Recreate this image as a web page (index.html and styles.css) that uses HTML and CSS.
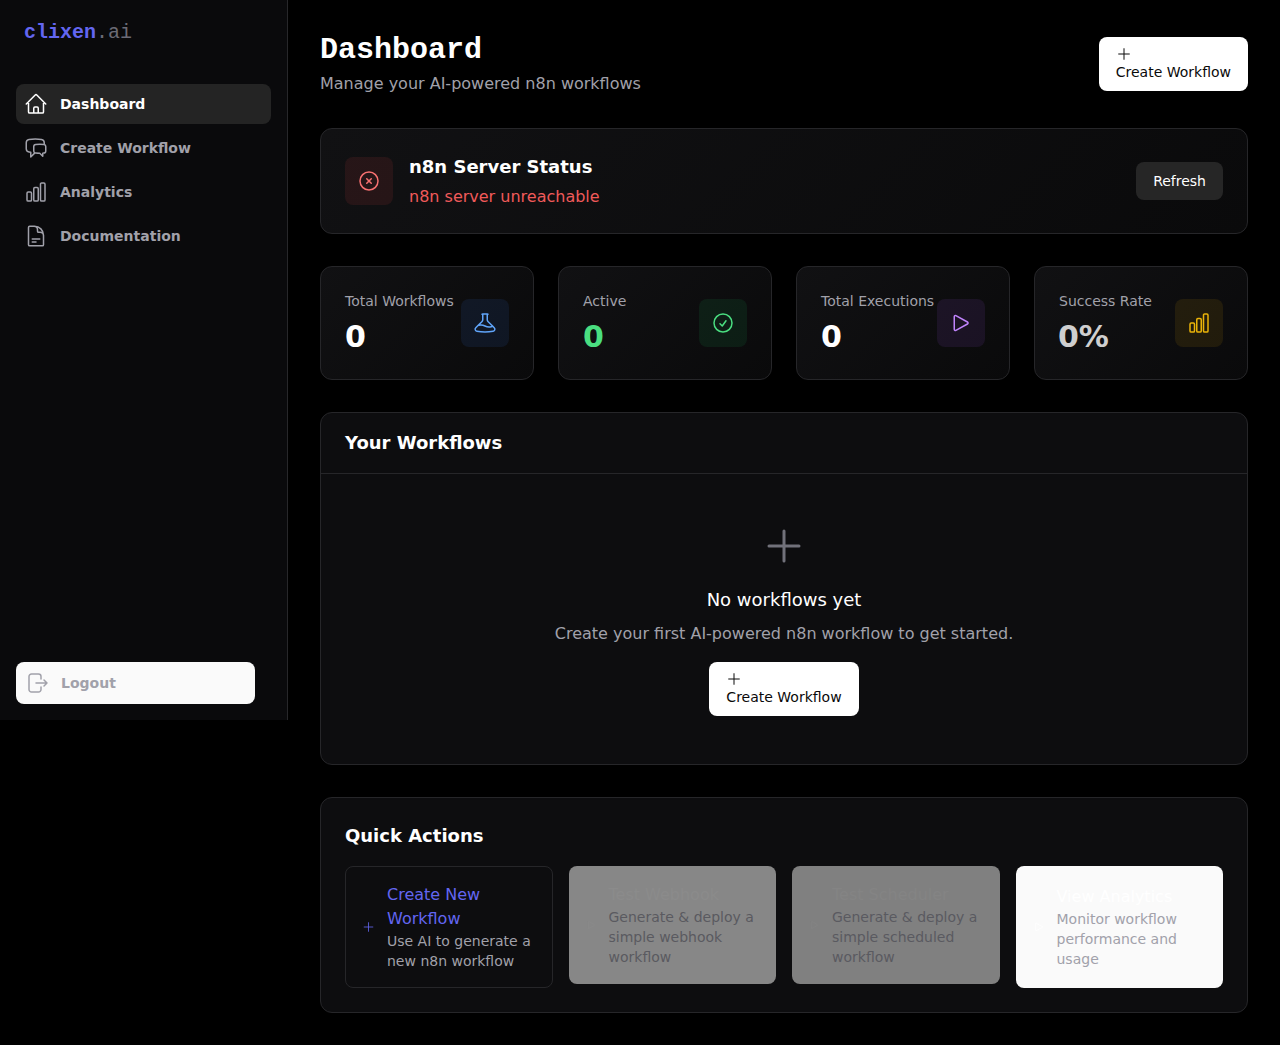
FILE: index.html
```html
<!DOCTYPE html>
<html lang="en">
<head>
    <meta charset="UTF-8">
    <meta name="viewport" content="width=device-width, initial-scale=1.0">
    <title>clixen.ai - Dashboard</title>
    <link rel="stylesheet" href="styles.css">
</head>
<body>
    <svg class="sprite" aria-hidden="true">
        <symbol id="i-home" viewBox="0 0 24 24"><path d="M2.25 12l8.954-8.955c.44-.439 1.152-.439 1.591 0L21.75 12M4.5 9.75v10.125c0 .621.504 1.125 1.125 1.125H9.75v-4.875c0-.621.504-1.125 1.125-1.125h2.25c.621 0 1.125.504 1.125 1.125V21h4.125c.621 0 1.125-.504 1.125-1.125V9.75M8.25 21h8.25"/></symbol>
        <symbol id="i-chat" viewBox="0 0 24 24"><path d="M20.25 8.511c.884.284 1.5 1.128 1.5 2.097v4.286c0 1.136-.847 2.1-1.98 2.193-.34.027-.68.052-1.02.072v3.091l-3-3c-1.354 0-2.694-.055-4.02-.163a2.115 2.115 0 01-.825-.242m9.345-8.334a2.126 2.126 0 00-.476-.095 48.64 48.64 0 00-8.048 0c-1.131.094-1.976 1.057-1.976 2.192v4.286c0 .837.46 1.58 1.155 1.951m9.345-8.334V6.637c0-1.621-1.152-3.026-2.76-3.235A48.455 48.455 0 0011.25 3c-2.115 0-4.198.137-6.24.402-1.608.209-2.76 1.614-2.76 3.235v6.226c0 1.621 1.152 3.026 2.76 3.235.577.075 1.157.14 1.74.194V21l4.155-4.155"/></symbol>
        <symbol id="i-chart" viewBox="0 0 24 24"><path d="M3 13.125C3 12.504 3.504 12 4.125 12h2.25c.621 0 1.125.504 1.125 1.125v6.75C7.5 20.496 6.996 21 6.375 21h-2.25A1.125 1.125 0 013 19.875v-6.75zM9.75 8.625c0-.621.504-1.125 1.125-1.125h2.25c.621 0 1.125.504 1.125 1.125v11.25c0 .621-.504 1.125-1.125 1.125h-2.25a1.125 1.125 0 01-1.125-1.125V8.625zM16.5 4.125c0-.621.504-1.125 1.125-1.125h2.25C20.496 3 21 3.504 21 4.125v15.75c0 .621-.504 1.125-1.125 1.125h-2.25a1.125 1.125 0 01-1.125-1.125V4.125z"/></symbol>
        <symbol id="i-doc" viewBox="0 0 24 24"><path d="M19.5 14.25v-2.625a3.375 3.375 0 00-3.375-3.375h-1.5A1.125 1.125 0 0113.5 7.125v-1.5a3.375 3.375 0 00-3.375-3.375H8.25m0 12.75h7.5m-7.5 3H12M10.5 2.25H5.625c-.621 0-1.125.504-1.125 1.125v17.25c0 .621.504 1.125 1.125 1.125h12.75c.621 0 1.125-.504 1.125-1.125V11.25a9 9 0 00-9-9z"/></symbol>
        <symbol id="i-logout" viewBox="0 0 24 24"><path d="M16 8V5.5A2.5 2.5 0 0013.5 3h-7A2.5 2.5 0 004 5.5v13A2.5 2.5 0 006.5 21h7a2.5 2.5 0 002.5-2.5V16M11 12h11M19 9l3 3-3 3"/></symbol>
        <symbol id="i-plus" viewBox="0 0 24 24"><path d="M12 4v16m8-8H4"/></symbol>
        <symbol id="i-plus-lg" viewBox="0 0 24 24"><path d="M12 4.5v15m7.5-7.5h-15"/></symbol>
        <symbol id="i-x" viewBox="0 0 24 24"><path d="M9.75 9.75l4.5 4.5m0-4.5l-4.5 4.5M21 12a9 9 0 11-18 0 9 9 0 0118 0z"/></symbol>
        <symbol id="i-beaker" viewBox="0 0 24 24"><path d="M9.75 3.104v5.714a2.25 2.25 0 01-.659 1.591L5 14.5M9.75 3.104c-.251.023-.501.05-.75.082m.75-.082a24.301 24.301 0 014.5 0m0 0v5.714c0 .597.237 1.17.659 1.591L19.8 15.3M14.25 3.104c.251.023.501.05.75.082M19.8 15.3l-1.57.393A9.065 9.065 0 0112 15a9.065 9.065 0 00-6.23-.693L5 14.5m14.8.8l1.402 1.402c1.232 1.232.65 3.318-1.067 3.611A48.309 48.309 0 0112 21c-2.773 0-5.491-.235-8.135-.687-1.718-.293-2.3-2.379-1.067-3.61L5 14.5"/></symbol>
        <symbol id="i-check" viewBox="0 0 24 24"><path d="M9 12.75L11.25 15 15 9.75M21 12a9 9 0 11-18 0 9 9 0 0118 0z"/></symbol>
        <symbol id="i-play" viewBox="0 0 24 24"><path d="M5.25 5.653c0-.856.917-1.398 1.667-.986l11.54 6.348a1.125 1.125 0 010 1.971l-11.54 6.347a1.125 1.125 0 01-1.667-.985V5.653z"/></symbol>
    </svg>

    <aside class="sidebar">
        <div class="logo"><span class="logo-name">clixen</span><span class="logo-tld">.ai</span></div>
        <nav class="nav">
            <a class="nav-item active"><svg class="icon"><use href="#i-home"/></svg>Dashboard</a>
            <a class="nav-item"><svg class="icon"><use href="#i-chat"/></svg>Create Workflow</a>
            <a class="nav-item"><svg class="icon"><use href="#i-chart"/></svg>Analytics</a>
            <a class="nav-item"><svg class="icon"><use href="#i-doc"/></svg>Documentation</a>
        </nav>
        <button class="logout"><svg class="icon"><use href="#i-logout"/></svg>Logout</button>
    </aside>

    <main class="main">
        <header class="page-header">
            <div>
                <h1 class="page-title">Dashboard</h1>
                <p class="page-sub">Manage your AI-powered n8n workflows</p>
            </div>
            <button class="btn-create"><svg class="icon-sm"><use href="#i-plus"/></svg><span>Create Workflow</span></button>
        </header>

        <section class="card status">
            <div class="icon-box red"><svg class="icon"><use href="#i-x"/></svg></div>
            <div class="status-text">
                <h3 class="status-title">n8n Server Status</h3>
                <p class="status-msg">n8n server unreachable</p>
            </div>
            <button class="btn-refresh">Refresh</button>
        </section>

        <section class="stats">
            <div class="card stat">
                <div>
                    <p class="stat-label">Total Workflows</p>
                    <p class="stat-value">0</p>
                </div>
                <div class="icon-box blue"><svg class="icon"><use href="#i-beaker"/></svg></div>
            </div>
            <div class="card stat">
                <div>
                    <p class="stat-label">Active</p>
                    <p class="stat-value value-green">0</p>
                </div>
                <div class="icon-box green"><svg class="icon"><use href="#i-check"/></svg></div>
            </div>
            <div class="card stat">
                <div>
                    <p class="stat-label">Total Executions</p>
                    <p class="stat-value">0</p>
                </div>
                <div class="icon-box purple"><svg class="icon"><use href="#i-play"/></svg></div>
            </div>
            <div class="card stat">
                <div>
                    <p class="stat-label">Success Rate</p>
                    <p class="stat-value value-grey">0%</p>
                </div>
                <div class="icon-box yellow"><svg class="icon"><use href="#i-chart"/></svg></div>
            </div>
        </section>

        <section class="panel">
            <h2 class="panel-head">Your Workflows</h2>
            <div class="empty">
                <svg class="empty-icon"><use href="#i-plus-lg"/></svg>
                <h3 class="empty-title">No workflows yet</h3>
                <p class="empty-text">Create your first AI-powered n8n workflow to get started.</p>
                <button class="btn-create"><svg class="icon-sm"><use href="#i-plus"/></svg><span>Create Workflow</span></button>
            </div>
        </section>

        <section class="panel quick">
            <h2 class="quick-title">Quick Actions</h2>
            <div class="quick-grid">
                <button class="action action-primary">
                    <svg class="action-icon"><use href="#i-plus"/></svg>
                    <span><span class="action-name">Create New Workflow</span><span class="action-desc">Use AI to generate a new n8n workflow</span></span>
                </button>
                <button class="action action-webhook">
                    <svg class="action-icon"><use href="#i-play"/></svg>
                    <span><span class="action-name">Test Webhook</span><span class="action-desc">Generate &amp; deploy a simple webhook workflow</span></span>
                </button>
                <button class="action action-schedule">
                    <svg class="action-icon"><use href="#i-play"/></svg>
                    <span><span class="action-name">Test Scheduler</span><span class="action-desc">Generate &amp; deploy a simple scheduled workflow</span></span>
                </button>
                <button class="action action-light">
                    <svg class="action-icon"><use href="#i-play"/></svg>
                    <span><span class="action-name">View Analytics</span><span class="action-desc">Monitor workflow performance and usage</span></span>
                </button>
            </div>
        </section>
    </main>
</body>
</html>
```

FILE: styles.css
```css
* {
    box-sizing: border-box;
}

body {
    margin: 0;
    background-color: #000;
    color: #fff;
    font-family: "DejaVu Sans", sans-serif;
    display: flex;
    align-items: flex-start;
}

h1, h2, h3, p {
    margin: 0;
}

button {
    font-family: inherit;
    cursor: pointer;
}

.sprite {
    display: none;
}

.icon,
.icon-sm,
.empty-icon,
.action-icon {
    fill: none;
    stroke: currentColor;
    stroke-width: 1.5;
    stroke-linecap: round;
    stroke-linejoin: round;
}

.icon {
    width: 24px;
    height: 24px;
    flex-shrink: 0;
}

.icon-sm {
    display: block;
    width: 16px;
    height: 16px;
    stroke-width: 1.5;
}

/* sidebar */
.sidebar {
    flex: 0 0 288px;
    height: 720px;
    display: flex;
    flex-direction: column;
    padding: 0 32px 16px 16px;
    background-color: #0a0a0c;
    border-right: 1px solid #27272a;
}

.logo {
    margin: 0 -16px 0 8px;
    height: 84px;
    padding-top: 21px;
    font-family: "Liberation Mono", monospace;
    font-size: 20px;
    line-height: 24px;
}

.logo-name {
    color: #6366f1;
    font-weight: bold;
}

.logo-tld {
    color: #6b6b76;
}

.nav {
    display: flex;
    flex-direction: column;
    gap: 4px;
    margin-right: -16px;
}

.nav-item {
    display: flex;
    align-items: center;
    gap: 12px;
    height: 40px;
    padding: 0 8px;
    border-radius: 8px;
    font-size: 14px;
    font-weight: bold;
    color: #a1a1aa;
}

.nav-item.active {
    background-color: #242424;
    color: #fff;
}

.logout {
    margin-top: auto;
    display: flex;
    align-items: center;
    gap: 12px;
    height: 42px;
    padding: 0 9px;
    background-color: #fafafa;
    border: none;
    border-radius: 8px;
    font-size: 14px;
    font-weight: bold;
    color: #a1a1aa;
}

/* main column */
.main {
    flex: 1;
    min-width: 0;
    padding: 32px;
}

.page-header {
    display: flex;
    justify-content: space-between;
    align-items: center;
    margin-bottom: 32px;
}

.page-title {
    font-family: "Liberation Mono", monospace;
    font-size: 30px;
    line-height: 36px;
    font-weight: bold;
}

.page-sub {
    margin-top: 4px;
    font-size: 16px;
    line-height: 24px;
    color: #a1a1aa;
}

.btn-create {
    padding: 9px 17px;
    background-color: #fff;
    border: none;
    border-radius: 8px;
    font-size: 14px;
    line-height: 20px;
    color: #0a0a0a;
    text-align: left;
}

.btn-create span {
    display: block;
}

.card {
    background: linear-gradient(135deg, #111113, #0a0a0b);
    border: 1px solid #262629;
    border-radius: 12px;
}

.icon-box {
    flex: 0 0 48px;
    height: 48px;
    display: flex;
    align-items: center;
    justify-content: center;
    border-radius: 8px;
}

.red {
    background-color: rgba(239, 68, 68, 0.1);
    color: #f87171;
}

.blue {
    background-color: rgba(59, 130, 246, 0.1);
    color: #60a5fa;
}

.green {
    background-color: rgba(34, 197, 94, 0.1);
    color: #4ade80;
}

.purple {
    background-color: rgba(168, 85, 247, 0.1);
    color: #c084fc;
}

.yellow {
    background-color: rgba(234, 179, 8, 0.1);
    color: #eab308;
}

/* server status */
.status {
    display: flex;
    align-items: center;
    gap: 16px;
    padding: 24px;
    margin-bottom: 32px;
}

.status-text {
    flex: 1;
}

.status-title {
    font-size: 18px;
    line-height: 28px;
    font-weight: bold;
}

.status-msg {
    font-size: 16px;
    line-height: 24px;
    margin-top: 4px;
    color: #f05a5a;
}

.btn-refresh {
    height: 38px;
    padding: 0 17px;
    background-color: #262626;
    border: none;
    border-radius: 8px;
    font-size: 14px;
    color: #fff;
}

/* stats row */
.stats {
    display: grid;
    grid-template-columns: repeat(4, 1fr);
    gap: 24px;
    margin-bottom: 32px;
}

.stat {
    display: flex;
    align-items: center;
    justify-content: space-between;
    padding: 24px;
}

.stat-label {
    font-size: 14px;
    line-height: 20px;
    color: #a1a1aa;
    white-space: nowrap;
}

.stat-value {
    margin-top: 8px;
    font-size: 30px;
    line-height: 36px;
    font-weight: bold;
}

.value-green {
    color: #4ade80;
}

.value-grey {
    margin-left: -1px;
    color: #cfcfcf;
}

/* panels */
.panel {
    background-color: #0d0d0f;
    border: 1px solid #262629;
    border-radius: 12px;
    margin-bottom: 32px;
}

.panel-head {
    padding: 16px 24px;
    font-size: 18px;
    line-height: 28px;
    font-weight: bold;
    border-bottom: 1px solid #262629;
}

.empty {
    display: flex;
    flex-direction: column;
    align-items: center;
    padding: 48px 24px;
}

.empty-icon {
    width: 48px;
    height: 48px;
    color: #71717a;
    margin-bottom: 16px;
}

.empty-title {
    font-size: 18px;
    line-height: 28px;
    font-weight: normal;
}

.empty-text {
    margin: 8px 0 16px;
    font-size: 16px;
    line-height: 24px;
    color: #a1a1aa;
}

.quick {
    padding: 24px;
    margin-bottom: 0;
}

.quick-title {
    font-size: 18px;
    line-height: 28px;
    font-weight: bold;
    margin-bottom: 16px;
}

.quick-grid {
    display: grid;
    grid-template-columns: repeat(4, 1fr);
    gap: 16px;
}

.action {
    display: flex;
    align-items: center;
    gap: 12px;
    padding: 16px;
    border: 1px solid transparent;
    border-radius: 8px;
    text-align: left;
}

.action-icon {
    flex: 0 0 13px;
    width: 13px;
    height: 16px;
}

.action-name {
    display: block;
    font-size: 16px;
    line-height: 24px;
}

.action-desc {
    display: block;
    font-size: 14px;
    line-height: 20px;
}

.action-primary {
    background-color: transparent;
    border-color: #262629;
    color: #6366f1;
}

.action-primary .action-desc {
    color: #a1a1aa;
}

.action-webhook,
.action-schedule {
    align-self: start;
}

.action-webhook .action-icon,
.action-schedule .action-icon {
    flex-basis: 11px;
    width: 11px;
}

.action-webhook {
    background-color: #878787;
    color: #8b8b8b;
}

.action-schedule {
    background-color: #808080;
    color: #848484;
}

.action-webhook .action-desc,
.action-schedule .action-desc {
    color: #5a5a60;
}

.action-light {
    background-color: #fafafa;
    color: #fff;
}

.action-light .action-icon {
    flex-basis: 12px;
    width: 12px;
}

.action-light .action-desc {
    color: #a1a1aa;
}
```
